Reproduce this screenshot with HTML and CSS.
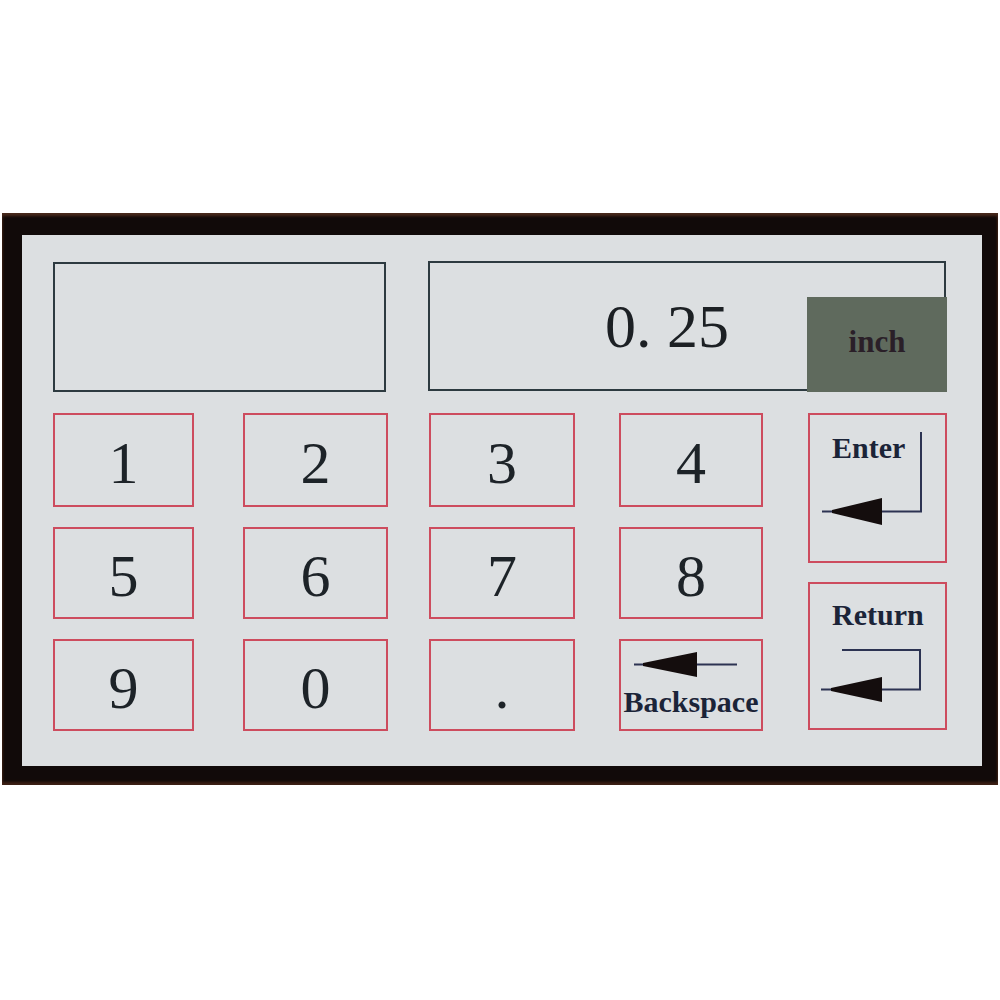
FILE: index.html
```html
<!doctype html>
<html>
<head>
<meta charset="utf-8">
<title>数字键盘</title>
<link rel="stylesheet" href="styles.css">
</head>

<body>
	<div class="bezel">
		<div class="screen">
			<!-- 上面是两个显示框 -->
			<div class="top">
				<div class="display display-left"></div>
				<div class="display display-right">
					<span class="value">0. 25</span>
					<span class="unit">inch</span>
				</div>
			</div>

			<!-- 下面是键盘 -->
			<div class="keypad">
				<div class="keys">
					<div class="key narrow">1</div>
					<div class="key">2</div>
					<div class="key narrow">3</div>
					<div class="key">4</div>
					<div class="key narrow">5</div>
					<div class="key">6</div>
					<div class="key narrow">7</div>
					<div class="key">8</div>
					<div class="key narrow">9</div>
					<div class="key">0</div>
					<div class="key narrow">.</div>
					<div class="key key-icon key-back">
						<svg width="140" height="88" viewBox="0 0 140 88">
							<line x1="13" y1="23.5" x2="116" y2="23.5" class="stroke"/>
							<polygon points="22,22 76,11 76,36 22,25" class="head"/>
						</svg>
						<span class="label">Backspace</span>
					</div>
				</div>
				<div class="side">
					<div class="key key-icon key-enter">
						<svg width="135" height="146" viewBox="0 0 135 146">
							<polyline points="111,17 111,96.5 12,96.5" class="stroke"/>
							<polygon points="22,95 72,83 72,110 22,98" class="head"/>
						</svg>
						<span class="label">Enter</span>
					</div>
					<div class="key key-icon key-return">
						<svg width="135" height="144" viewBox="0 0 135 144">
							<polyline points="32,66 110,66 110,105.5 11,105.5" class="stroke"/>
							<polygon points="21,104 72,93 72,118 21,107" class="head"/>
						</svg>
						<span class="label">Return</span>
					</div>
				</div>
			</div>
		</div>
	</div>
</body>
</html>
```

FILE: styles.css
```css
	*{
		padding: 0;
		margin: 0;
		box-sizing: border-box;
	}
	body{
		background-color: #fff;
	}
	.bezel{
		width: 996px;
		height: 572px;
		margin: 213px 0 0 2px;
		padding: 22px 0 0 20px;
		background-color: #110a09;
		box-shadow: inset 0 3px 3px #4a2a1c, inset 0 -3px 3px #3e2014;
	}
	.screen{
		width: 960px;
		height: 531px;
		padding: 26px 0 0 31px;
		background-color: #dcdfe1;
		font-family: "Liberation Serif", serif;
		color: #1d2328;
	}
	.top{
		display: flex;
		gap: 42px;
	}
	.display{
		height: 130px;
		border: 2px solid #2d3a40;
	}
	.display-left{
		width: 333px;
		margin-top: 1px;
	}
	.display-right{
		width: 518px;
		display: flex;
		justify-content: flex-end;
	}
	.display-right .value{
		align-self: center;
		margin-right: 78px;
		font-size: 62px;
		line-height: 1;
		color: #1c2024;
	}
	.display-right .unit{
		align-self: flex-end;
		width: 140px;
		height: 95px;
		margin: 0 -3px -3px 0;
		padding-bottom: 6px;
		background-color: #5f6a5d;
		display: flex;
		align-items: center;
		justify-content: center;
		font-size: 31px;
		font-weight: bold;
		line-height: 1;
		color: #2a1f28;
	}
	.keypad{
		display: flex;
		gap: 45px;
		margin-top: 21px;
	}
	/* 第1、3列的按键窄一点, 列间距不完全一样 */
	.keys{
		display: grid;
		grid-template-columns: 149px 145px 149px 144px;
		grid-template-rows: 94px 92px 92px;
		column-gap: 41px;
		row-gap: 20px;
	}
	.key{
		border: 2px solid #cd4c5e;
		display: flex;
		align-items: center;
		justify-content: center;
		padding-top: 6px;
		font-size: 60px;
		line-height: 1;
	}
	.key.narrow{
		width: 141px;
	}
	.key.narrow:nth-child(4n+3){
		width: 146px;
	}
	.side{
		width: 139px;
		display: flex;
		flex-direction: column;
		gap: 19px;
	}
	/* 带图标的按键: 图标和文字叠在同一个格子里 */
	.key-icon{
		display: grid;
		padding: 0;
		font-size: 30px;
		font-weight: bold;
		color: #1b2438;
	}
	.key-icon > *{
		grid-area: 1 / 1;
		align-self: start;
	}
	.key-icon .label{
		line-height: 1;
	}
	.key-enter{
		height: 150px;
	}
	.key-enter .label{
		padding: 18px 0 0 22px;
	}
	.key-return{
		height: 148px;
	}
	.key-return .label{
		padding: 16px 0 0 22px;
	}
	.key-back .label{
		padding-top: 46px;
		justify-self: center;
	}
	.key-back svg{
		justify-self: start;
	}
	.stroke{
		fill: none;
		stroke: #2c3352;
		stroke-width: 2;
	}
	.head{
		fill: #140d0d;
	}
```
